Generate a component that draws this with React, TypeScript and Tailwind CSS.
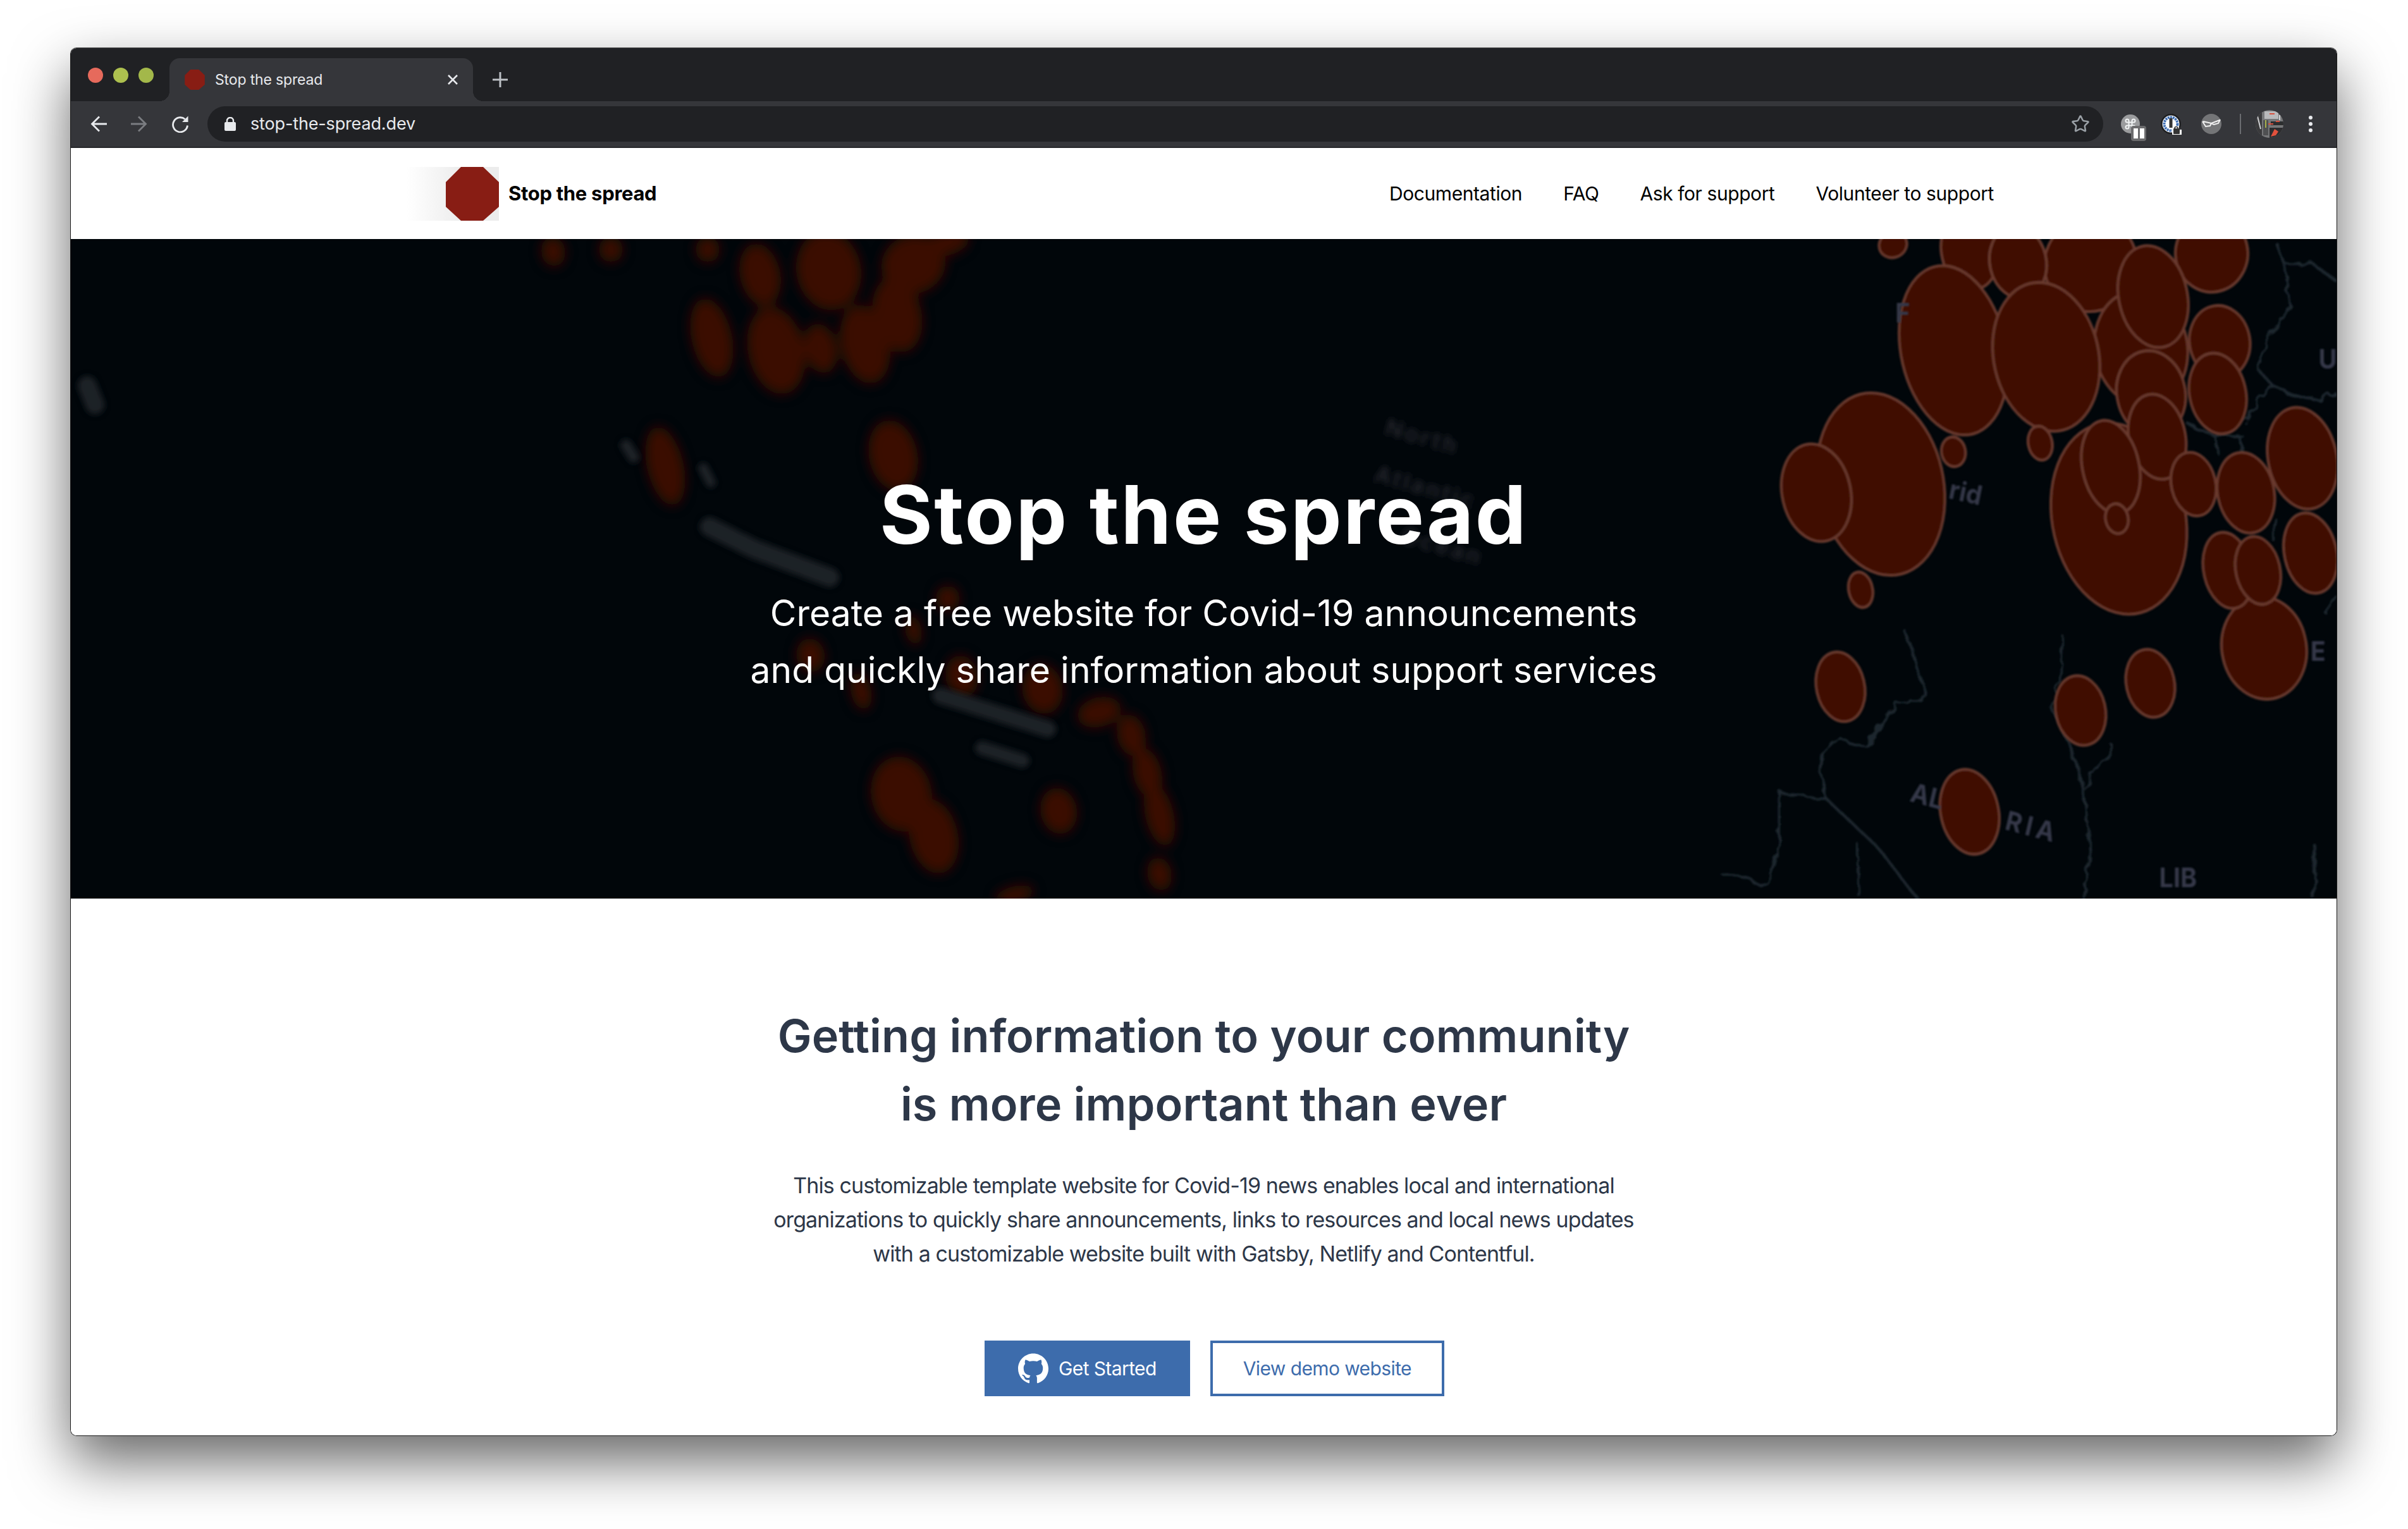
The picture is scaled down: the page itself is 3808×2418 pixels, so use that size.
// App.tsx
import { Command, Star } from 'lucide-react';
import { SiGithub } from 'react-icons/si';

type Blob = [number, number, number, number];

// measured on the right side of the hero (sharp part of the map)
const sharpBlobs: Blob[] = [
  [460, 25, 35, 30],
  [650, 40, 70, 90],
  [950, 70, 115, 110],
  [770, 65, 70, 85],
  [1250, 45, 90, 90],
  [610, 270, 130, 200],
  [1075, 265, 115, 135],
  [840, 285, 130, 175],
  [1105, 145, 85, 120],
  [1270, 250, 75, 85],
  [1265, 370, 70, 95],
  [1100, 370, 85, 100],
  [1020, 660, 165, 225],
  [1115, 470, 70, 100],
  [1000, 540, 70, 110],
  [1015, 660, 28, 35],
  [1205, 580, 55, 75],
  [1335, 600, 70, 95],
  [1475, 520, 85, 120],
  [1495, 740, 65, 95],
  [1380, 960, 105, 120],
  [1290, 780, 60, 90],
  [1365, 780, 55, 80],
  [430, 580, 155, 215],
  [270, 600, 85, 115],
  [610, 505, 30, 35],
  [825, 485, 30, 40],
  [380, 825, 30, 42],
  [330, 1050, 60, 82],
  [925, 1105, 62, 82],
  [1098, 1042, 60, 80],
  [650, 1340, 72, 100],
];

// blurred red patches in the middle of the hero
const softBlobs: Blob[] = [
  [30, 25, 30, 30],
  [160, 85, 50, 75],
  [330, 75, 80, 95],
  [40, 235, 50, 95],
  [200, 265, 70, 105],
  [310, 260, 40, 60],
  [420, 250, 60, 95],
  [500, 180, 60, 90],
  [540, 60, 80, 70],
  [620, 10, 60, 30],
  [490, 515, 60, 85],
  [625, 855, 30, 30],
  [540, 930, 20, 35],
  [285, 990, 35, 40],
  [410, 1075, 25, 45],
  [660, 1040, 40, 50],
  [860, 1070, 50, 60],
  [1000, 1125, 55, 35],
  [1080, 1180, 35, 50],
  [1120, 1270, 35, 60],
  [1150, 1370, 35, 75],
  [1150, 1510, 30, 40],
  [900, 1360, 45, 55],
  [510, 1320, 75, 90],
  [590, 1420, 60, 90],
  [790, 1560, 50, 20],
  [-353, 30, 30, 35],
  [-210, 25, 30, 30],
  [-75, 540, 45, 95],
];

const borders = [
  'M490 920L520 1000L545 1075L470 1090L440 1130L385 1190L330 1170L285 1210L280 1250L295 1310L180 1295L180 1420L150 1510L30 1480',
  'M295 1310L420 1420L520 1540',
  'M370 1410L380 1540',
  'M880 930L875 1030L855 1100L910 1210L935 1310L950 1440L930 1540',
  'M935 1290L950 1250L1000 1210L1000 1180',
  'M1500 1410L1510 1480L1500 1540',
  'M1410 20L1430 70L1445 170L1400 220L1380 270L1360 310L1400 350L1370 380L1340 430L1260 470',
  'M1430 70L1500 70L1560 110',
  'M1400 350L1480 385L1560 370',
  'M1190 440L1260 470L1330 470',
  'M1260 470L1265 510',
  'M1320 470L1325 510',
  'M1410 660L1400 710',
  'M1560 840L1530 880',
];

function HeroMap() {
  return (
    <svg className="absolute inset-0 w-full h-full" viewBox="0 0 3583 1043" preserveAspectRatio="none">
      <defs>
        <filter id="soft" x="-20%" y="-20%" width="140%" height="140%">
          <feGaussianBlur stdDeviation="14" />
        </filter>
        <filter id="softer" x="-20%" y="-20%" width="140%" height="140%">
          <feGaussianBlur stdDeviation="5" />
        </filter>
        <filter id="sharp" x="-5%" y="-5%" width="110%" height="110%">
          <feGaussianBlur stdDeviation="2.6" />
        </filter>
        {/* borders wobble a little, like on the blurred map photo */}
        <filter id="wobble" x="-5%" y="-5%" width="110%" height="110%">
          <feTurbulence type="fractalNoise" baseFrequency="0.035" numOctaves="2" seed="4" />
          <feDisplacementMap in="SourceGraphic" scale="26" />
          <feGaussianBlur stdDeviation="2.4" />
        </filter>
      </defs>

      {/* soft red patches */}
      <g transform="translate(988,0) scale(0.638,0.665)" filter="url(#soft)" fill="#3a0d06">
        {softBlobs.map((b, i) => (
          <ellipse key={i} cx={b[0]} cy={b[1]} rx={b[2]} ry={b[3]} transform={`rotate(-14 ${b[0]} ${b[1]})`} />
        ))}
      </g>

      {/* blurry labels */}
      <g filter="url(#softer)" fill="none" stroke="#1f2126" strokeLinecap="round">
        <path d="M26 232L38 262" strokeWidth="30" />
        <path d="M878 326L890 345" strokeWidth="18" />
        <path d="M1000 362L1012 385" strokeWidth="16" />
        <path d="M1010 455L1080 490L1200 535" strokeWidth="30" strokeDasharray="46 8" />
        <path d="M1375 722L1545 775" strokeWidth="26" strokeDasharray="40 8" />
        <path d="M1441 805L1505 825" strokeWidth="22" />
      </g>
      <g filter="url(#softer)" fill="#25282e" fontFamily="Inter, sans-serif" fontSize="36" fontWeight="600" textAnchor="middle">
        <text x="2134" y="325" transform="rotate(16 2134 325)" letterSpacing="4">North</text>
        <text x="2139" y="405" transform="rotate(16 2139 405)" letterSpacing="4">Atlantic</text>
        <text x="2165" y="498" transform="rotate(16 2165 498)" letterSpacing="4">Ocean</text>
      </g>

      {/* sharp part on the right */}
      <g transform="translate(2588,-8) scale(0.638,0.682)">
        <g fill="none" stroke="#1d282e" strokeWidth="7" strokeLinejoin="round" filter="url(#wobble)">
          {borders.map((d, i) => (
            <path key={i} d={d} />
          ))}
        </g>
        <g fill="#3f0f05" stroke="#6a3a2e" strokeWidth="6" filter="url(#sharp)">
          {sharpBlobs.map((b, i) => (
            <ellipse key={i} cx={b[0]} cy={b[1]} rx={b[2]} ry={b[3]} transform={`rotate(-14 ${b[0]} ${b[1]})`} />
          ))}
        </g>
        <g fill="#343848" fontFamily="Inter, sans-serif" fontWeight="700" fontSize="62" filter="url(#sharp)">
          <text x="466" y="205">F</text>
          <text x="1515" y="312">U</text>
          <text x="596" y="612" transform="rotate(12 596 612)">rid</text>
          <text x="500" y="1315" transform="rotate(14 500 1315)">AL</text>
          <text x="735" y="1380" transform="rotate(14 735 1380)" letterSpacing="10">RIA</text>
          <text x="1495" y="990">E</text>
          <text x="1120" y="1515">LIB</text>
        </g>
      </g>
    </svg>
  );
}

function Octagon({ className }: { className?: string }) {
  return (
    <svg className={className} viewBox="0 0 84 85">
      <polygon points="24,0 59,0 84,24 84,63 59,85 24,85 0,63 0,24" fill="#881d14" />
    </svg>
  );
}

function Logo() {
  return (
    <div className="flex items-center gap-[15px]">
      <div className="flex w-[146px] h-[85px] justify-end bg-gradient-to-r from-white to-[#ececec] to-60%">
        <Octagon className="w-[84px] h-[85px]" />
      </div>
      <span className="text-[31px] font-bold tracking-[-0.3px] text-black">Stop the spread</span>
    </div>
  );
}

function TabStrip() {
  return (
    <div className="flex h-[84px] pt-[16px] bg-[#202124]">
      <div className="flex w-[156px] pl-[27px] pt-[15px] gap-[16px]">
        <span className="w-6 h-6 rounded-full bg-[#e66a5c]" />
        <span className="w-6 h-6 rounded-full bg-[#adc04f]" />
        <span className="w-6 h-6 rounded-full bg-[#a3b84a]" />
      </div>
      <div className="relative flex items-center w-[480px] h-[68px] pl-[23px] pr-[24px] bg-[#35363a] rounded-t-[16px] before:absolute before:bottom-0 before:-left-4 before:w-4 before:h-4 before:bg-[radial-gradient(circle_at_0_0,#202124_16px,#35363a_16px)] after:absolute after:bottom-0 after:-right-4 after:w-4 after:h-4 after:bg-[radial-gradient(circle_at_100%_0,#202124_16px,#35363a_16px)]">
        <Octagon className="w-[34px] h-[32px]" />
        <span className="ml-[15px] flex-1 text-[23px] text-[#e8eaed] tracking-[-0.15px]">Stop the spread</span>
        <svg width="16" height="16" viewBox="0 0 16 16" stroke="#e8eaed" strokeWidth="2.6">
          <path d="M1 1L15 15M15 1L1 15" />
        </svg>
      </div>
      <div className="flex items-center h-[68px] pl-[31px]">
        <svg width="24" height="24" viewBox="0 0 24 24" stroke="#bdc1c6" strokeWidth="3">
          <path d="M12 0V24M0 12H24" />
        </svg>
      </div>
    </div>
  );
}

function Toolbar() {
  return (
    <div className="flex items-center h-[74px] border-b-2 border-[#26272a] bg-[#35363a]">
      <div className="flex items-center w-[216px] pl-[31px] gap-[38px]">
        <svg width="26" height="26" viewBox="0 0 26 26" fill="none" stroke="#e8eaed" strokeWidth="2.8">
          <path d="M26 13H3M14 1.5L2.5 13L14 24.5" />
        </svg>
        <svg width="26" height="26" viewBox="0 0 26 26" fill="none" stroke="#7b7d81" strokeWidth="2.8">
          <path d="M0 13H23M12 1.5L23.5 13L12 24.5" />
        </svg>
        <svg width="28" height="28" viewBox="0 0 28 28" fill="none" stroke="#e8eaed" strokeWidth="2.8">
          <path d="M21.5 6.5A11.5 11.5 0 1 0 25.5 16.5" />
          <path d="M26.5 1.5V11H17Z" fill="#e8eaed" stroke="none" />
        </svg>
      </div>
      <div className="flex items-center w-[2998px] h-[56px] rounded-full bg-[#202124] pl-[27px] pr-[21px]">
        <svg width="18" height="22" viewBox="0 0 18 22" fill="#e8eaed">
          <path d="M4 9V6a5 5 0 0 1 10 0v3" fill="none" stroke="#e8eaed" strokeWidth="2.4" />
          <rect y="8" width="18" height="14" rx="2" />
        </svg>
        <span className="ml-[23px] flex-1 text-[27px] text-[#e8eaed] tracking-[-0.15px]">stop-the-spread.dev</span>
        <Star size={30} color="#9aa0a6" strokeWidth={2} />
      </div>
      <div className="relative flex items-center flex-1 pl-[28px]">
        <ExtensionIcons />
      </div>
    </div>
  );
}

function ExtensionIcons() {
  return (
    <>
      <div className="relative flex items-center justify-center w-[30px] h-[30px] rounded-full bg-[#9b9c9e]">
        <Command size={20} color="#f1f3f4" strokeWidth={2.4} />
        <div className="absolute -right-[10px] -bottom-[12px] flex gap-[3px] items-center justify-center w-6 h-6 rounded-[4px] bg-[#6b6b6d]">
          <span className="w-[7px] h-[16px] bg-white" />
          <span className="w-[7px] h-[16px] bg-white" />
        </div>
      </div>
      <div className="ml-[32px]">
        <svg width="34" height="34" viewBox="0 0 34 34" className="block">
          <circle cx="17" cy="17" r="16" fill="#1d1e20" />
          <circle cx="17" cy="17" r="13.5" fill="#fff" />
          <circle cx="17" cy="17" r="10.5" fill="none" stroke="#3f6fb5" strokeWidth="4" strokeDasharray="3 1" />
          <rect x="14.5" y="8" width="5" height="15" fill="#333" />
          <path d="M19 24h3a4 4 0 0 1 8 0v2h4v8H19z" fill="#fff" />
          <rect x="21" y="24" width="10" height="9" rx="1" fill="#333" />
          <path d="M23 24a2.5 2.5 0 0 1 5 0" fill="none" stroke="#333" strokeWidth="1.6" />
        </svg>
      </div>
      <div className="ml-[31px]">
        <svg width="32" height="32" viewBox="0 0 32 32" className="block">
          <circle cx="16" cy="16" r="16" fill="#747577" />
          <path d="M2 12L7 20L14 19L16 15L20 17L27 15L30 9M3 12L16 15L29 10" fill="none" stroke="#f1f1f1" strokeWidth="2" />
        </svg>
      </div>
      <div className="ml-[29px] w-[2px] h-[32px] bg-[#6a6c70]" />
      <div className="ml-[23px]">
        <svg width="44" height="44" viewBox="0 0 44 44" className="block">
          <defs>
            <clipPath id="avatar">
              <circle cx="22" cy="22" r="22" />
            </clipPath>
          </defs>
          <g clipPath="url(#avatar)">
            <rect width="44" height="44" fill="#77787a" />
            <rect x="0" y="0" width="10" height="44" fill="#3a3a3c" />
            <rect x="14" y="2" width="22" height="12" fill="#b9babc" />
            <rect x="12" y="16" width="8" height="24" fill="#4f5052" />
            <rect x="24" y="18" width="20" height="6" fill="#2c2d2e" />
            <rect x="22" y="28" width="22" height="16" fill="#2d2d2f" />
            <path d="M24 42L30 30L36 34L32 40Z" fill="#e2513d" />
            <path d="M16 16V28" stroke="#a8b04a" strokeWidth="2" />
            <path d="M22 6H30M32 18H38M20 22H28" stroke="#d8503e" strokeWidth="2" />
            <path d="M2 6L8 30M38 8V16" stroke="#cfd0d2" strokeWidth="2" />
          </g>
        </svg>
      </div>
      <div className="ml-[40px] flex flex-col gap-[4px]">
        <span className="w-[6px] h-[6px] rounded-full bg-[#e8eaed]" />
        <span className="w-[6px] h-[6px] rounded-full bg-[#e8eaed]" />
        <span className="w-[6px] h-[6px] rounded-full bg-[#e8eaed]" />
      </div>
    </>
  );
}

function NavBar() {
  return (
    <div className="flex items-center justify-between h-[144px] bg-white pl-[531px] pr-[542px]">
      <Logo />
      <div className="flex gap-[65px] text-[30px] text-black tracking-[-0.42px]">
        <span>Documentation</span>
        <span>FAQ</span>
        <span>Ask for support</span>
        <span>Volunteer to support</span>
      </div>
    </div>
  );
}

function Hero() {
  return (
    <div className="relative h-[1043px] bg-[#01060a] overflow-hidden">
      <HeroMap />
      <div className="relative flex flex-col items-center pt-[364px] text-white">
        <h1 className="text-[128px] leading-[144px] font-bold tracking-[2.6px]">Stop the spread</h1>
        <p className="mt-[39px] text-[57px] leading-[90px] text-center">
          Create a free website for Covid-19 announcements
          <br />
          and quickly share information about support services
        </p>
      </div>
    </div>
  );
}

function Intro() {
  return (
    <div className="flex flex-col items-center h-[849px] pt-[163px] bg-white text-[#2d3748]">
      <h2 className="text-[72px] leading-[108px] font-semibold text-center tracking-[0.1px]">
        Getting information to your community
        <br />
        is more important than ever
      </h2>
      <p className="mt-[48px] text-[34px] leading-[54px] text-center tracking-[-0.9px]">
        This customizable template website for Covid-19 news enables local and international
        <br />
        organizations to quickly share announcements, links to resources and local news updates
        <br />
        with a customizable website built with Gatsby, Netlify and Contentful.
      </p>
      <div className="flex gap-[32px] mt-[110px] ml-[34px]">
        <div className="flex items-center h-[88px] px-[53px] gap-[16px] bg-[#3d6cac] text-white text-[30px] tracking-[-0.6px]">
          <SiGithub size={48} />
          <span>Get Started</span>
        </div>
        <div className="flex items-center h-[88px] px-[48px] border-4 border-[#3d6cac] text-[#3d6cac] text-[30px] tracking-[-0.6px]">
          View demo website
        </div>
      </div>
    </div>
  );
}

export default function App() {
  return (
    <div className="w-[3808px] h-[2418px] pt-[75px] pl-[111px] bg-white font-['Inter',sans-serif] overflow-hidden">
      <div className="w-[3585px] h-[2196px] border border-[#1a1a1a] border-t-[#555] rounded-[10px] overflow-hidden shadow-[0_40px_90px_rgba(0,0,0,0.6)]">
        <TabStrip />
        <Toolbar />
        <NavBar />
        <Hero />
        <Intro />
      </div>
    </div>
  );
}
